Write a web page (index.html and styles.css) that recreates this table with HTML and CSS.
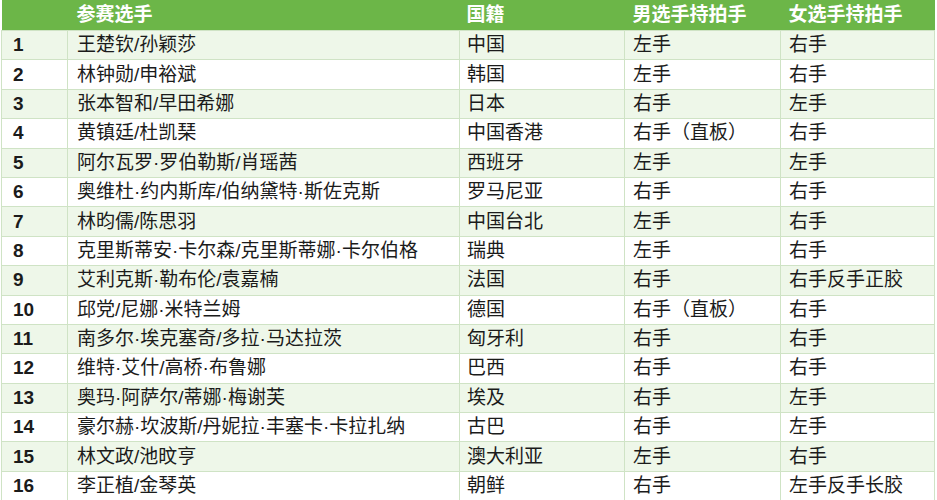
FILE: index.html
```html
<!DOCTYPE html>
<html lang="zh">
<head>
<meta charset="utf-8">
<title>参赛选手</title>
<link rel="stylesheet" href="styles.css">
</head>
<body>
<div class="wrap">
<table class="players">
<colgroup>
<col class="c-no"><col class="c-name"><col class="c-nat"><col class="c-m"><col class="c-f">
</colgroup>
<thead>
<tr><th></th><th>参赛选手</th><th>国籍</th><th>男选手持拍手</th><th>女选手持拍手</th></tr>
</thead>
<tbody>
<tr><td class="no">1</td><td>王楚钦/孙颖莎</td><td>中国</td><td>左手</td><td>右手</td></tr>
<tr><td class="no">2</td><td>林钟勋/申裕斌</td><td>韩国</td><td>左手</td><td>右手</td></tr>
<tr><td class="no">3</td><td>张本智和/早田希娜</td><td>日本</td><td>右手</td><td>左手</td></tr>
<tr><td class="no">4</td><td>黄镇廷/杜凯琹</td><td>中国香港</td><td>右手（直板）</td><td>右手</td></tr>
<tr><td class="no">5</td><td>阿尔瓦罗·罗伯勒斯/肖瑶茜</td><td>西班牙</td><td>左手</td><td>左手</td></tr>
<tr><td class="no">6</td><td>奥维杜·约内斯库/伯纳黛特·斯佐克斯</td><td>罗马尼亚</td><td>右手</td><td>右手</td></tr>
<tr><td class="no">7</td><td>林昀儒/陈思羽</td><td>中国台北</td><td>左手</td><td>右手</td></tr>
<tr><td class="no">8</td><td>克里斯蒂安·卡尔森/克里斯蒂娜·卡尔伯格</td><td>瑞典</td><td>左手</td><td>右手</td></tr>
<tr><td class="no">9</td><td>艾利克斯·勒布伦/袁嘉楠</td><td>法国</td><td>右手</td><td>右手反手正胶</td></tr>
<tr><td class="no">10</td><td>邱党/尼娜·米特兰姆</td><td>德国</td><td>右手（直板）</td><td>右手</td></tr>
<tr><td class="no">11</td><td>南多尔·埃克塞奇/多拉·马达拉茨</td><td>匈牙利</td><td>右手</td><td>右手</td></tr>
<tr><td class="no">12</td><td>维特·艾什/高桥·布鲁娜</td><td>巴西</td><td>右手</td><td>右手</td></tr>
<tr><td class="no">13</td><td>奥玛·阿萨尔/蒂娜·梅谢芙</td><td>埃及</td><td>右手</td><td>左手</td></tr>
<tr><td class="no">14</td><td>豪尔赫·坎波斯/丹妮拉·丰塞卡·卡拉扎纳</td><td>古巴</td><td>右手</td><td>左手</td></tr>
<tr><td class="no">15</td><td>林文政/池旼亨</td><td>澳大利亚</td><td>左手</td><td>右手</td></tr>
<tr><td class="no">16</td><td>李正植/金琴英</td><td>朝鲜</td><td>右手</td><td>左手反手长胶</td></tr>
</tbody>
</table>
</div>
</body>
</html>
```
FILE: styles.css
```css
html, body {
  margin: 0;
  padding: 0;
  background: #ffffff;
}
.wrap {
  padding: 0 3px 0 1px;
}
.players {
  width: 933px;
  border-collapse: collapse;
  table-layout: fixed;
  font-family: "Liberation Sans", "Noto Sans CJK SC", sans-serif;
  font-size: 19px;
  color: #1b1b1b;
}
.c-no { width: 66px; }
.c-name { width: 392px; }
.c-nat { width: 165px; }
.c-m { width: 156px; }
.c-f { width: 154px; }
.players th {
  background: #6cb648;
  color: #ffffff;
  font-weight: bold;
  text-align: left;
  height: 30px;
  padding: 0 8px;
  border: none;
  white-space: nowrap;
  line-height: 22px;
}
.players td {
  height: 28.4px;
  padding: 0 8px;
  border: 1px solid #cfe3c5;
  white-space: nowrap;
  line-height: 22px;
}
.players tbody tr:nth-child(odd) td {
  background: #eef7e9;
}
.players td.no {
  font-weight: bold;
  padding-left: 11px;
}
.players th:nth-child(2), .players td:nth-child(2) {
  padding-left: 9px;
}
.players th:nth-child(3), .players td:nth-child(3) {
  padding-left: 7px;
}
```
